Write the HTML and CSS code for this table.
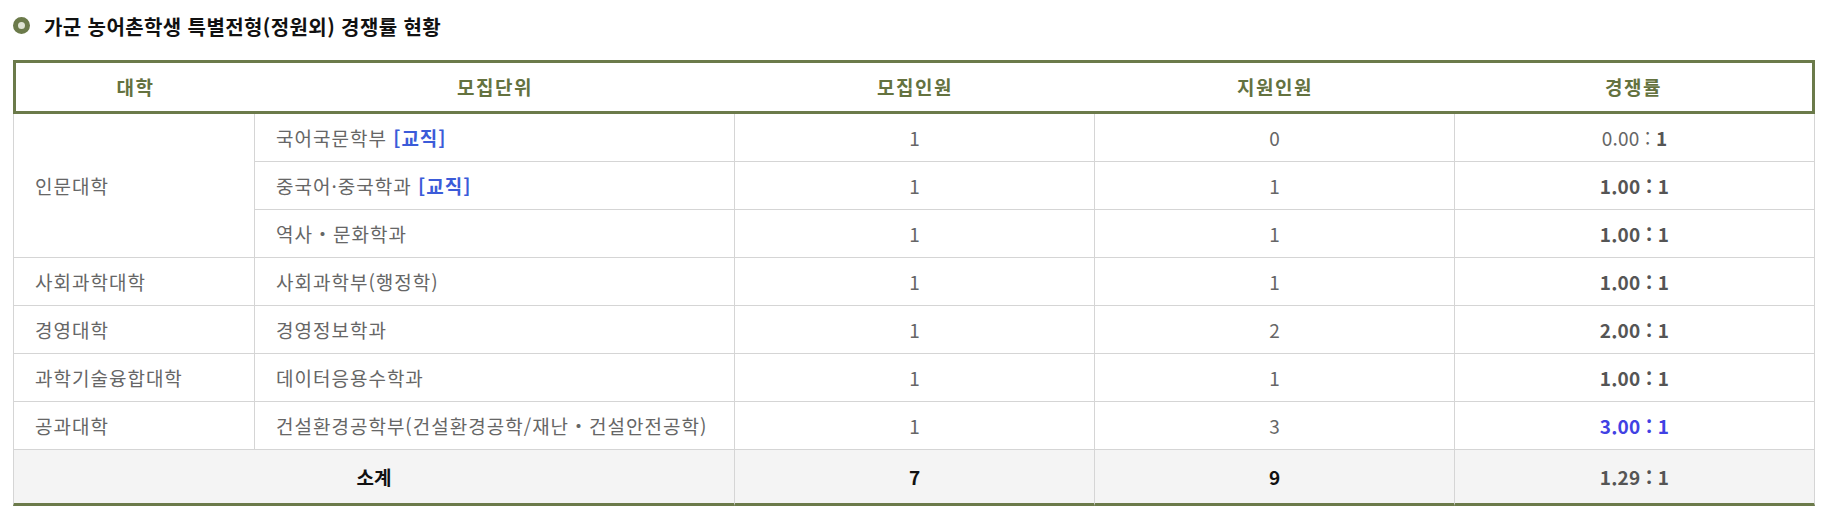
FILE: index.html
```html
<!DOCTYPE html>
<html lang="ko">
<head>
<meta charset="utf-8">
<title>가군 농어촌학생 특별전형(정원외) 경쟁률 현황</title>
<link rel="stylesheet" href="styles.css">
</head>
<body>
<div class="wrap">
  <h2 class="title"><span class="bullet"></span>가군 농어촌학생 특별전형(정원외) 경쟁률 현황</h2>
  <table class="rate">
    <colgroup>
      <col class="w1"><col class="w2"><col class="w3"><col class="w3"><col class="w3">
    </colgroup>
    <thead>
      <tr>
        <th class="first">대학</th>
        <th>모집단위</th>
        <th>모집인원</th>
        <th>지원인원</th>
        <th class="last">경쟁률</th>
      </tr>
    </thead>
    <tbody>
      <tr>
        <td class="c1 left" rowspan="3">인문대학</td>
        <td class="left">국어국문학부 <b class="tag">[교직]</b></td>
        <td>1</td>
        <td>0</td>
        <td class="num">0.00 : <b class="ratio">1</b></td>
      </tr>
      <tr>
        <td class="left">중국어·중국학과 <b class="tag">[교직]</b></td>
        <td>1</td>
        <td>1</td>
        <td class="num ratio">1.00 : 1</td>
      </tr>
      <tr>
        <td class="left">역사・문화학과</td>
        <td>1</td>
        <td>1</td>
        <td class="num ratio">1.00 : 1</td>
      </tr>
      <tr>
        <td class="c1 left">사회과학대학</td>
        <td class="left">사회과학부(행정학)</td>
        <td>1</td>
        <td>1</td>
        <td class="num ratio">1.00 : 1</td>
      </tr>
      <tr>
        <td class="c1 left">경영대학</td>
        <td class="left">경영정보학과</td>
        <td>1</td>
        <td>2</td>
        <td class="num ratio">2.00 : 1</td>
      </tr>
      <tr>
        <td class="c1 left">과학기술융합대학</td>
        <td class="left">데이터응용수학과</td>
        <td>1</td>
        <td>1</td>
        <td class="num ratio">1.00 : 1</td>
      </tr>
      <tr>
        <td class="c1 left">공과대학</td>
        <td class="left">건설환경공학부(건설환경공학/재난・건설안전공학)</td>
        <td>1</td>
        <td>3</td>
        <td class="num ratio hot">3.00 : 1</td>
      </tr>
    </tbody>
    <tfoot>
      <tr>
        <td class="c1 strong" colspan="2">소계</td>
        <td class="strong">7</td>
        <td class="strong">9</td>
        <td class="num ratio">1.29 : 1</td>
      </tr>
    </tfoot>
  </table>
</div>
</body>
</html>
```

FILE: styles.css
```css
html, body {
  margin: 0;
  padding: 0;
  background: #fff;
}

body {
  font-family: "Noto Sans CJK KR", "Noto Sans", sans-serif;
  color: #666;
}

.wrap {
  padding: 13px 13px 0 13px;
}

.title {
  display: flex;
  align-items: center;
  margin: 0;
  height: 28px;
  line-height: 28px;
  font-size: 20px;
  letter-spacing: 0.4px;
  font-weight: 700;
  color: #111;
}

.bullet {
  display: inline-block;
  box-sizing: border-box;
  width: 17px;
  height: 17px;
  margin: -4px 14px 0 0;
  border-radius: 50%;
  border: 5px solid #6b7a4a;
  background: #dfe3d3;
  flex: none;
}

.rate {
  width: 100%;
  margin-top: 19px;
  border-collapse: separate;
  border-spacing: 0;
  table-layout: fixed;
  font-size: 19px;
}

.w1 { width: 242px; }
.w2 { width: 480px; }
.w3 { width: 360px; }

.rate th {
  padding: 0;
  line-height: 48px;
  font-weight: 700;
  letter-spacing: 1.5px;
  color: #64723f;
  border-top: 3px solid #6b7a4a;
  border-bottom: 3px solid #6b7a4a;
  text-align: center;
}

.rate th.first { border-left: 3px solid #6b7a4a; }
.rate th.last { border-right: 3px solid #6b7a4a; }

.rate td {
  padding: 0;
  line-height: 47px;
  text-align: center;
  border-right: 1px solid #d5d5d5;
  border-bottom: 1px solid #d5d5d5;
  color: #666;
}

.rate td.c1 { border-left: 1px solid #d5d5d5; }

.rate td.left {
  text-align: left;
  padding-left: 21px;
  letter-spacing: 1px;
}

.rate td.num {
  letter-spacing: 0.2px;
}

.tag {
  color: #3b5bd9;
  font-weight: 700;
}

.ratio {
  font-weight: 700;
  color: #555;
}

.rate td.ratio { color: #555; }
.rate td.hot { color: #4141e3; }

.rate tfoot td {
  background: #f4f4f4;
  line-height: 53px;
  border-bottom: 3px solid #6b7a4a;
}

.rate tfoot td.strong {
  color: #111;
  font-weight: 700;
}
```
